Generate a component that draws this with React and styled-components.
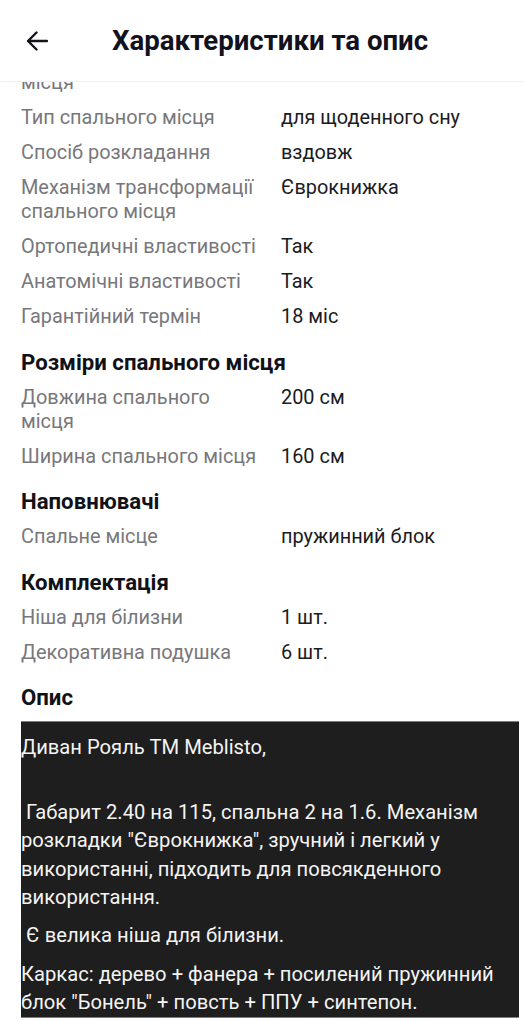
import React from "react";
import styled, { createGlobalStyle } from "styled-components";

const Global = createGlobalStyle`
  html, body { margin: 0; padding: 0; background: #fff; }
  body { font-family: Roboto, "Noto Sans", "Liberation Sans", sans-serif; -webkit-font-smoothing: antialiased; }
  * { box-sizing: border-box; }
`;

const Page = styled.div`
  height: 100vh;
  display: flex;
  flex-direction: column;
  overflow: hidden;
  background: #fff;
`;

const Header = styled.header`
  flex: 0 0 82px;
  display: flex;
  align-items: center;
  padding-left: 26px;
  border-bottom: 1px solid #efeff2;
`;

const BackButton = styled.button`
  border: 0;
  background: none;
  padding: 0;
  width: 22px;
  height: 20px;
  margin-right: 64px;
  display: flex;
  align-items: center;
  justify-content: center;
  color: #14141f;
  cursor: pointer;
`;

const Title = styled.h1`
  margin: 0;
  font-size: 27.6px;
  font-weight: 700;
  color: #12121d;
`;

const Scroll = styled.main`
  flex: 1 1 auto;
  overflow: hidden;
`;

const Inner = styled.div`
  margin-top: -35px;
  padding: 0 21px;
`;

const Section = styled.section`
  padding-top: ${(p) => (p.$first ? "0" : "18.5px")};
`;

const Heading = styled.h2`
  margin: 0 0 10px;
  font-size: 22.2px;
  line-height: 28px;
  font-weight: 700;
  color: #111118;
`;

const Rows = styled.div`
  display: flex;
  flex-direction: column;
  gap: 11px;
`;

const Row = styled.div`
  display: flex;
  align-items: flex-start;
  font-size: 19.9px;
  line-height: 24px;
`;

const Label = styled.div`
  flex: 0 0 260px;
  padding-right: 17px;
  color: #77777c;
`;

const Value = styled.div`
  flex: 1 1 auto;
  color: #1b1b22;
`;

const DescBox = styled.div`
  margin-top: 1px;
  margin-right: -16px;
  background: #1e1e1e;
  border-top: 1px solid #7e7e7e;
  border-bottom: 1px solid #7e7e7e;
  color: #f4f4f4;
  font-size: 20.2px;
  line-height: 28.4px;
`;

const Para = styled.p`
  margin: ${(p) => (p.$lead ? "11px 0 8px" : "0 0 10px")};
  &:last-child { margin-bottom: 0; }
`;

const ArrowIcon = () => (
  <svg width="22" height="20" viewBox="0 0 22 20" fill="none">
    <path
      d="M21 10H2 M10.5 1.5 L2 10 L10.5 18.5"
      stroke="currentColor"
      strokeWidth="2.4"
      strokeLinecap="round"
      strokeLinejoin="round"
    />
  </svg>
);

const sections = [
  {
    first: true,
    rows: [
      ["Наявність спального місця", "Так"],
      ["Тип спального місця", "для щоденного сну"],
      ["Спосіб розкладання", "вздовж"],
      ["Механізм трансформації спального місця", "Єврокнижка"],
      ["Ортопедичні властивості", "Так"],
      ["Анатомічні властивості", "Так"],
      ["Гарантійний термін", "18 міс"],
    ],
  },
  {
    title: "Розміри спального місця",
    rows: [
      ["Довжина спального місця", "200 см"],
      ["Ширина спального місця", "160 см"],
    ],
  },
  {
    title: "Наповнювачі",
    rows: [["Спальне місце", "пружинний блок"]],
  },
  {
    title: "Комплектація",
    rows: [
      ["Ніша для білизни", "1 шт."],
      ["Декоративна подушка", "6 шт."],
    ],
  },
];

export default function App() {
  return (
    <>
      <Global />
      <Page>
        <Header>
          <BackButton aria-label="Назад">
            <ArrowIcon />
          </BackButton>
          <Title>Характеристики та опис</Title>
        </Header>
        <Scroll>
          <Inner>
            {sections.map((s, i) => (
              <Section key={i} $first={s.first}>
                {s.title && <Heading>{s.title}</Heading>}
                <Rows>
                  {s.rows.map(([l, v]) => (
                    <Row key={l}>
                      <Label>{l}</Label>
                      <Value>{v}</Value>
                    </Row>
                  ))}
                </Rows>
              </Section>
            ))}
            <Section>
              <Heading>Опис</Heading>
              <DescBox>
                <Para $lead>
                  Диван Рояль ТМ Meblisto,
                  <br />
                  <br />
                </Para>
                <Para>
                  {"\u00a0"}Габарит 2.40 на 115, спальна 2 на 1.6. Механізм розкладки "Єврокнижка", зручний і легкий у використанні, підходить для повсякденного використання.
                </Para>
                <Para>{"\u00a0"}Є велика ніша для білизни.</Para>
                <Para>
                  Каркас: дерево + фанера + посилений пружинний блок "Бонель" + повсть + ППУ + синтепон.
                </Para>
              </DescBox>
            </Section>
          </Inner>
        </Scroll>
      </Page>
    </>
  );
}
